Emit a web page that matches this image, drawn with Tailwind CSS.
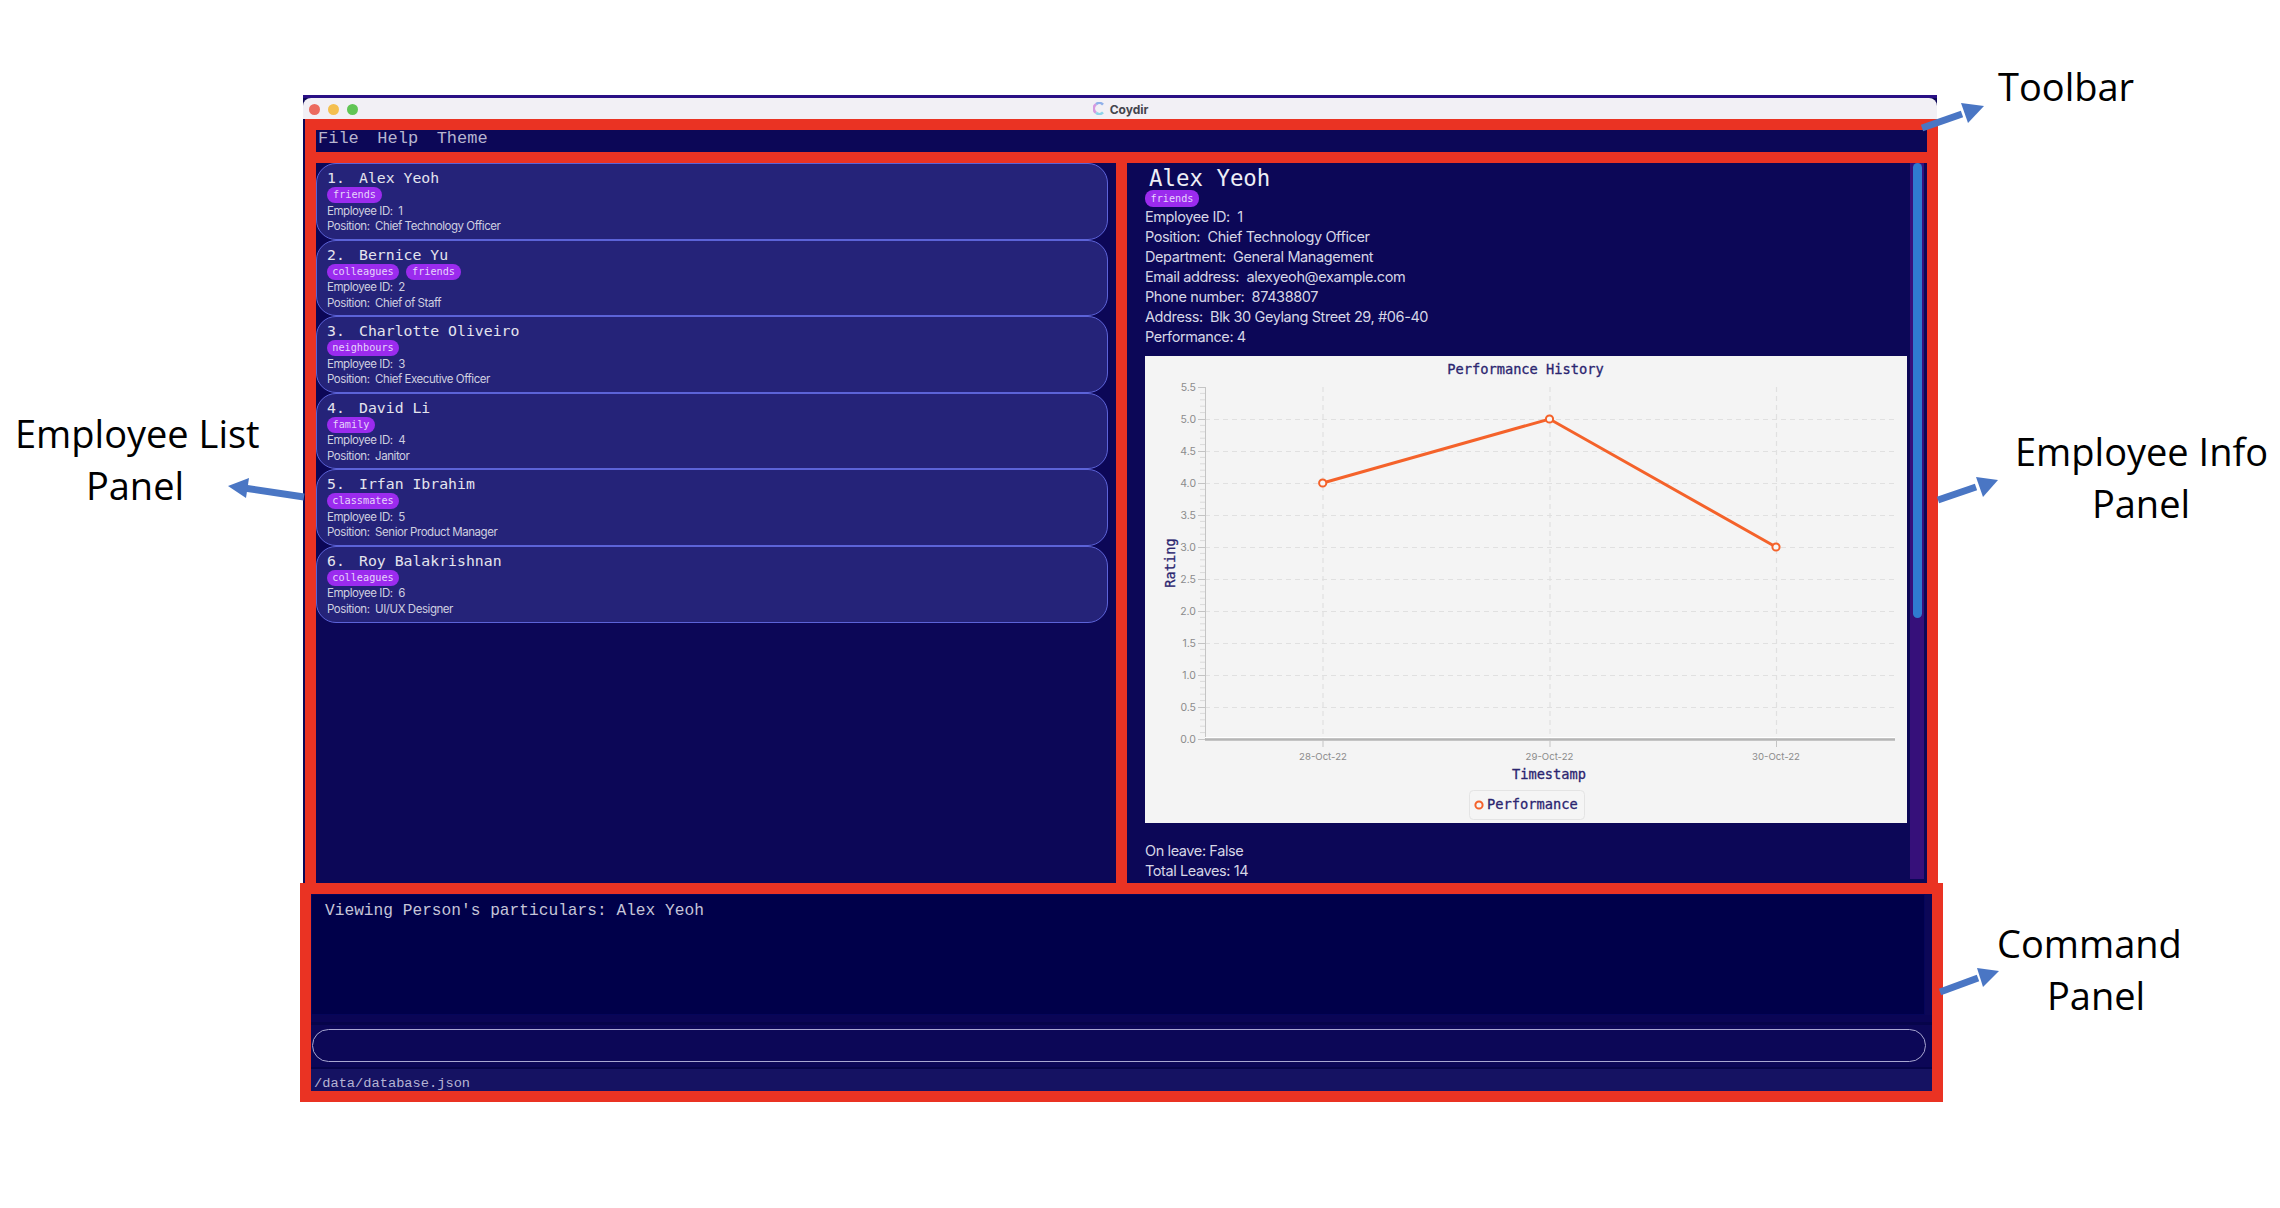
<!DOCTYPE html>
<html>
<head>
<meta charset="utf-8">
<script src="https://cdn.jsdelivr.net/npm/@tailwindcss/browser@4"></script>
</head>
<body class="m-0 bg-white">
<div class="relative w-[2280px] h-[1208px] overflow-hidden bg-white font-['Inter',sans-serif]">
  <div class="absolute left-[303px] top-[95px] w-[1634px] h-[996px] flex flex-col bg-[#0c0757] overflow-hidden border-t-[3px] border-[#2a1085]">
    <!-- title bar -->
    <div class="relative h-[21px] shrink-0 bg-[#f2f0f5] rounded-t-[8px] flex items-center justify-center gap-[5px] pl-[1px]">
      <div class="absolute left-[6px] top-[6px] flex gap-[8px]">
        <span class="w-[11px] h-[11px] rounded-full bg-[#ec6a5e]"></span>
        <span class="w-[11px] h-[11px] rounded-full bg-[#f4bf4f]"></span>
        <span class="w-[11px] h-[11px] rounded-full bg-[#61c554]"></span>
      </div>
      <svg class="w-[12px] h-[13px]" viewBox="0 0 12 13" fill="none"><path d="M10 2.6A5 5 0 0 0 3 2.3" stroke="#8fb0ea" stroke-width="2.6"/><path d="M3 2.3A5 5 0 0 0 3 10.7" stroke="#d69ae0" stroke-width="2.6"/><path d="M3 10.7A5 5 0 0 0 10 10.4" stroke="#8fd4ea" stroke-width="2.6"/></svg>
      <span class="text-[12px] leading-[21px] font-bold text-[#45454d] pt-[1px]">Coydir</span>
    </div>
    <!-- toolbar -->
    <div class="h-[44px] shrink-0 pl-[15px] pt-[10px] flex gap-[18.5px] font-['Liberation_Mono',monospace] text-[17px] leading-[20px] text-[#b7b5cf]">
      <span>File</span><span>Help</span><span>Theme</span>
    </div>
    <!-- main -->
    <div class="h-[720px] shrink-0 flex pl-[13px]">
      <div class="w-[792px] shrink-0 flex flex-col">
        <div class="h-[76.6px] shrink-0 rounded-[20px] bg-[#252379] border border-[#5c63d8] pl-[10px] pt-[5px]">
          <div class="h-[18px] leading-[18px] text-[14.8px] font-['DejaVu_Sans_Mono',monospace] text-[#e4e4ee] flex"><span class="w-[32px]">1.</span><span>Alex Yeoh</span></div>
          <div class="flex gap-[7px]"><span class="h-[16px] w-[55px] rounded-[8px] bg-[#9b2bee] text-center text-[10.2px] leading-[16px] font-['DejaVu_Sans_Mono',monospace] text-[#e6d4fb]">friends</span></div>
          <div class="text-[11.5px] tracking-[-0.45px] leading-[15px] text-[#cfcfe0] mt-[.5px] whitespace-pre">Employee ID:  1</div>
          <div class="text-[11.5px] tracking-[-0.45px] leading-[15px] text-[#cfcfe0] whitespace-pre pt-[.5px]">Position:  Chief Technology Officer</div>
        </div>
        <div class="h-[76.6px] shrink-0 rounded-[20px] bg-[#252379] border border-[#5c63d8] pl-[10px] pt-[5px]">
          <div class="h-[18px] leading-[18px] text-[14.8px] font-['DejaVu_Sans_Mono',monospace] text-[#e4e4ee] flex"><span class="w-[32px]">2.</span><span>Bernice Yu</span></div>
          <div class="flex gap-[7px]"><span class="h-[16px] w-[72px] rounded-[8px] bg-[#9b2bee] text-center text-[10.2px] leading-[16px] font-['DejaVu_Sans_Mono',monospace] text-[#e6d4fb]">colleagues</span><span class="h-[16px] w-[55px] rounded-[8px] bg-[#9b2bee] text-center text-[10.2px] leading-[16px] font-['DejaVu_Sans_Mono',monospace] text-[#e6d4fb]">friends</span></div>
          <div class="text-[11.5px] tracking-[-0.45px] leading-[15px] text-[#cfcfe0] mt-[.5px] whitespace-pre">Employee ID:  2</div>
          <div class="text-[11.5px] tracking-[-0.45px] leading-[15px] text-[#cfcfe0] whitespace-pre pt-[.5px]">Position:  Chief of Staff</div>
        </div>
        <div class="h-[76.6px] shrink-0 rounded-[20px] bg-[#252379] border border-[#5c63d8] pl-[10px] pt-[5px]">
          <div class="h-[18px] leading-[18px] text-[14.8px] font-['DejaVu_Sans_Mono',monospace] text-[#e4e4ee] flex"><span class="w-[32px]">3.</span><span>Charlotte Oliveiro</span></div>
          <div class="flex gap-[7px]"><span class="h-[16px] w-[72px] rounded-[8px] bg-[#9b2bee] text-center text-[10.2px] leading-[16px] font-['DejaVu_Sans_Mono',monospace] text-[#e6d4fb]">neighbours</span></div>
          <div class="text-[11.5px] tracking-[-0.45px] leading-[15px] text-[#cfcfe0] mt-[.5px] whitespace-pre">Employee ID:  3</div>
          <div class="text-[11.5px] tracking-[-0.45px] leading-[15px] text-[#cfcfe0] whitespace-pre pt-[.5px]">Position:  Chief Executive Officer</div>
        </div>
        <div class="h-[76.6px] shrink-0 rounded-[20px] bg-[#252379] border border-[#5c63d8] pl-[10px] pt-[5px]">
          <div class="h-[18px] leading-[18px] text-[14.8px] font-['DejaVu_Sans_Mono',monospace] text-[#e4e4ee] flex"><span class="w-[32px]">4.</span><span>David Li</span></div>
          <div class="flex gap-[7px]"><span class="h-[16px] w-[48px] rounded-[8px] bg-[#9b2bee] text-center text-[10.2px] leading-[16px] font-['DejaVu_Sans_Mono',monospace] text-[#e6d4fb]">family</span></div>
          <div class="text-[11.5px] tracking-[-0.45px] leading-[15px] text-[#cfcfe0] mt-[.5px] whitespace-pre">Employee ID:  4</div>
          <div class="text-[11.5px] tracking-[-0.45px] leading-[15px] text-[#cfcfe0] whitespace-pre pt-[.5px]">Position:  Janitor</div>
        </div>
        <div class="h-[76.6px] shrink-0 rounded-[20px] bg-[#252379] border border-[#5c63d8] pl-[10px] pt-[5px]">
          <div class="h-[18px] leading-[18px] text-[14.8px] font-['DejaVu_Sans_Mono',monospace] text-[#e4e4ee] flex"><span class="w-[32px]">5.</span><span>Irfan Ibrahim</span></div>
          <div class="flex gap-[7px]"><span class="h-[16px] w-[72px] rounded-[8px] bg-[#9b2bee] text-center text-[10.2px] leading-[16px] font-['DejaVu_Sans_Mono',monospace] text-[#e6d4fb]">classmates</span></div>
          <div class="text-[11.5px] tracking-[-0.45px] leading-[15px] text-[#cfcfe0] mt-[.5px] whitespace-pre">Employee ID:  5</div>
          <div class="text-[11.5px] tracking-[-0.45px] leading-[15px] text-[#cfcfe0] whitespace-pre pt-[.5px]">Position:  Senior Product Manager</div>
        </div>
        <div class="h-[76.6px] shrink-0 rounded-[20px] bg-[#252379] border border-[#5c63d8] pl-[10px] pt-[5px]">
          <div class="h-[18px] leading-[18px] text-[14.8px] font-['DejaVu_Sans_Mono',monospace] text-[#e4e4ee] flex"><span class="w-[32px]">6.</span><span>Roy Balakrishnan</span></div>
          <div class="flex gap-[7px]"><span class="h-[16px] w-[72px] rounded-[8px] bg-[#9b2bee] text-center text-[10.2px] leading-[16px] font-['DejaVu_Sans_Mono',monospace] text-[#e6d4fb]">colleagues</span></div>
          <div class="text-[11.5px] tracking-[-0.45px] leading-[15px] text-[#cfcfe0] mt-[.5px] whitespace-pre">Employee ID:  6</div>
          <div class="text-[11.5px] tracking-[-0.45px] leading-[15px] text-[#cfcfe0] whitespace-pre pt-[.5px]">Position:  UI/UX Designer</div>
        </div>
      </div>
      <!-- detail -->
      <div class="ml-[19px] w-[783px] shrink-0 pl-[18px]">
        <div class="h-[28px] pl-[4px] pt-[1px] leading-[28px] text-[22.4px] font-['DejaVu_Sans_Mono',monospace] text-[#eeeef6]">Alex Yeoh</div>
        <div class="-mt-px h-[17px] w-[54px] rounded-[8px] bg-[#9b2bee] text-center text-[10.2px] leading-[17px] font-['DejaVu_Sans_Mono',monospace] text-[#e6d4fb]">friends</div>
        <div class="text-[14.5px] tracking-[-0.4px] leading-[20px] text-[#d6d6e6] whitespace-pre"><div>Employee ID:  1</div><div>Position:  Chief Technology Officer</div><div>Department:  General Management</div><div>Email address:  alexyeoh@example.com</div><div>Phone number:  87438807</div><div>Address:  Blk 30 Geylang Street 29, #06-40</div><div>Performance: 4</div></div>
        <svg class="mt-[9px] block w-[762px] h-[467px]" viewBox="1144 356 762 467" font-family="Inter, sans-serif">
          <rect x="1144" y="356" width="762" height="467" fill="#f4f4f4"/>
          <g stroke="#e0e0e0" stroke-dasharray="5 4" stroke-width="1.2">
            <path d="M1204 419.5H1894M1204 451.5H1894M1204 483.5H1894M1204 515.5H1894M1204 547.5H1894M1204 579.5H1894M1204 611.5H1894M1204 643.5H1894M1204 675.5H1894M1204 707.5H1894"/>
            <path d="M1322 387V739M1549 387V739M1775.5 387V739"/>
          </g>
          <path d="M1204.5 387V739" stroke="#c4c4c4" stroke-width="1"/>
          <path d="M1199 393.4H1204M1199 399.8H1204M1199 406.2H1204M1199 412.6H1204M1199 425.4H1204M1199 431.8H1204M1199 438.2H1204M1199 444.6H1204M1199 457.4H1204M1199 463.8H1204M1199 470.2H1204M1199 476.6H1204M1199 489.4H1204M1199 495.8H1204M1199 502.2H1204M1199 508.6H1204M1199 521.4H1204M1199 527.8H1204M1199 534.2H1204M1199 540.6H1204M1199 553.4H1204M1199 559.8H1204M1199 566.2H1204M1199 572.6H1204M1199 585.4H1204M1199 591.8H1204M1199 598.2H1204M1199 604.6H1204M1199 617.4H1204M1199 623.8H1204M1199 630.2H1204M1199 636.6H1204M1199 649.4H1204M1199 655.8H1204M1199 662.2H1204M1199 668.6H1204M1199 681.4H1204M1199 687.8H1204M1199 694.2H1204M1199 700.6H1204M1199 713.4H1204M1199 719.8H1204M1199 726.2H1204M1199 732.6H1204" stroke="#dadada"/>
          <path d="M1197 387.5H1204M1197 419.5H1204M1197 451.5H1204M1197 483.5H1204M1197 515.5H1204M1197 547.5H1204M1197 579.5H1204M1197 611.5H1204M1197 643.5H1204M1197 675.5H1204M1197 707.5H1204M1197 739.5H1204" stroke="#c4c4c4"/>
          <path d="M1204 737.5H1894" stroke="#ffffff" stroke-width="1"/>
          <path d="M1204 739.5H1894" stroke="#b5b5b5" stroke-width="2.4"/>
          <path d="M1322 740V747M1549 740V747M1775.5 740V747" stroke="#c4c4c4"/>
          <g font-size="10.5" fill="#8b8b8b" text-anchor="end">
            <text x="1195" y="391">5.5</text><text x="1195" y="423">5.0</text><text x="1195" y="455">4.5</text><text x="1195" y="487">4.0</text><text x="1195" y="519">3.5</text><text x="1195" y="551">3.0</text><text x="1195" y="583">2.5</text><text x="1195" y="615">2.0</text><text x="1195" y="647">1.5</text><text x="1195" y="679">1.0</text><text x="1195" y="711">0.5</text><text x="1195" y="743">0.0</text>
          </g>
          <g font-size="9.6" fill="#8b8b8b" text-anchor="middle">
            <text x="1322" y="760">28-Oct-22</text><text x="1548.5" y="760">29-Oct-22</text><text x="1775" y="760">30-Oct-22</text>
          </g>
          <g font-family="DejaVu Sans Mono, monospace" font-size="13.7" fill="#2b2570" stroke="#2b2570" stroke-width="0.3">
            <text x="1524.5" y="374" text-anchor="middle">Performance History</text>
            <text x="1548" y="779" text-anchor="middle">Timestamp</text>
            <text transform="translate(1173.5 563) rotate(-90)" text-anchor="middle">Rating</text>
          </g>
          <polyline points="1321.7,483 1548.5,419 1775,547" fill="none" stroke="#f4622a" stroke-width="3"/>
          <g fill="#f7f7f7" stroke="#f4622a" stroke-width="2">
            <circle cx="1321.7" cy="483" r="3.6"/><circle cx="1548.5" cy="419" r="3.6"/><circle cx="1775" cy="547" r="3.6"/>
          </g>
          <rect x="1468.5" y="790.5" width="115" height="29" rx="4" fill="#f5f5f5" stroke="#e4e4e4"/>
          <circle cx="1478" cy="805" r="3.6" fill="#f7f7f7" stroke="#f4622a" stroke-width="2"/>
          <text x="1486" y="809" font-family="DejaVu Sans Mono, monospace" font-size="13.7" fill="#2b2570" stroke="#2b2570" stroke-width="0.3">Performance</text>
        </svg>
        <div class="mt-[18px] text-[14.5px] tracking-[-0.4px] leading-[20px] text-[#d6d6e6]"><div>On leave: False</div><div>Total Leaves: 14</div></div>
      </div>
      <div class="relative w-[14px] h-[716px] shrink-0 bg-[#36107a]">
        <div class="absolute left-[3px] top-0 w-[9px] h-[455px] rounded-[5px] bg-[#2f7bd0]"></div>
      </div>
    </div>
    <!-- command panel -->
    <div class="flex-1 flex flex-col pl-[8px] pr-[5px]">
      <div class="h-[11px] shrink-0"></div>
      <div class="h-[121px] shrink-0 bg-[#00004a] border border-[#05055a] pl-[13px] pt-[6px] mr-[7px] font-['Liberation_Mono',monospace] text-[16.2px] leading-[20px] text-[#c5c5d8]">Viewing Person's particulars: Alex Yeoh</div>
      <div class="h-[7px] shrink-0 bg-[#0a0555]"></div>
      <div class="h-[3px] shrink-0 bg-[#06044a]"></div>
      <div class="h-[4px] shrink-0"></div>
      <div class="ml-[1px] mr-[6px] h-[33px] shrink-0 rounded-full border-[1.5px] border-[#a9a7d2] bg-[#0c0757]"></div>
      <div class="h-[5px] shrink-0"></div>
      <div class="h-[2px] shrink-0 bg-[#06044a]"></div>
      <div class="flex-1 bg-[#151262] pl-[3px] font-['Liberation_Mono',monospace] text-[13.7px] leading-[30px] text-[#b5b4d4]">/data/database.json</div>
    </div>
  </div>
  <!-- red annotation boxes -->
  <div class="absolute left-[305px] top-[119px] w-[1633px] h-[44px] border-[11px] border-[#ea3323]"></div>
  <div class="absolute left-[305px] top-[152px] w-[822px] h-[742px] border-[11px] border-[#ea3323]"></div>
  <div class="absolute left-[1116px] top-[152px] w-[822px] h-[742px] border-[11px] border-[#ea3323]"></div>
  <div class="absolute left-[300px] top-[883px] w-[1643px] h-[219px] border-[11px] border-[#ea3323]"></div>
  <!-- arrows -->
  <svg class="absolute left-0 top-0 w-[2280px] h-[1208px] pointer-events-none" viewBox="0 0 2280 1208" fill="#4a76c4">
    <path d="M1922 128L1962 114" stroke="#4a76c4" stroke-width="7"/><path d="M1984 106L1961 103L1968 123Z"/>
    <path d="M304 497L244 488" stroke="#4a76c4" stroke-width="7"/><path d="M228 486L249 478L246 498Z"/>
    <path d="M1938 500L1976 487" stroke="#4a76c4" stroke-width="7"/><path d="M1998 480L1976 477L1983 497Z"/>
    <path d="M1940 992L1978 978" stroke="#4a76c4" stroke-width="7"/><path d="M1999 971L1977 968L1983 987Z"/>
  </svg>
  <!-- labels -->
  <div class="absolute left-[1998px] top-[61px] text-[38px] leading-[50px] font-['Open_Sans',sans-serif] text-black whitespace-pre">Toolbar</div>
  <div class="absolute left-[15px] top-[407px] text-[38px] leading-[52px] w-[240px] text-center font-['Open_Sans',sans-serif] text-black whitespace-pre">Employee List
Panel</div>
  <div class="absolute left-[2015px] top-[425px] text-[38px] leading-[52px] w-[252px] text-center font-['Open_Sans',sans-serif] text-black whitespace-pre">Employee Info
Panel</div>
  <div class="absolute left-[1997px] top-[917px] text-[38px] leading-[52px] text-black font-['Open_Sans',sans-serif]"><div>Command</div><div class="pl-[50px]">Panel</div></div>
</div>
</body>
</html>
